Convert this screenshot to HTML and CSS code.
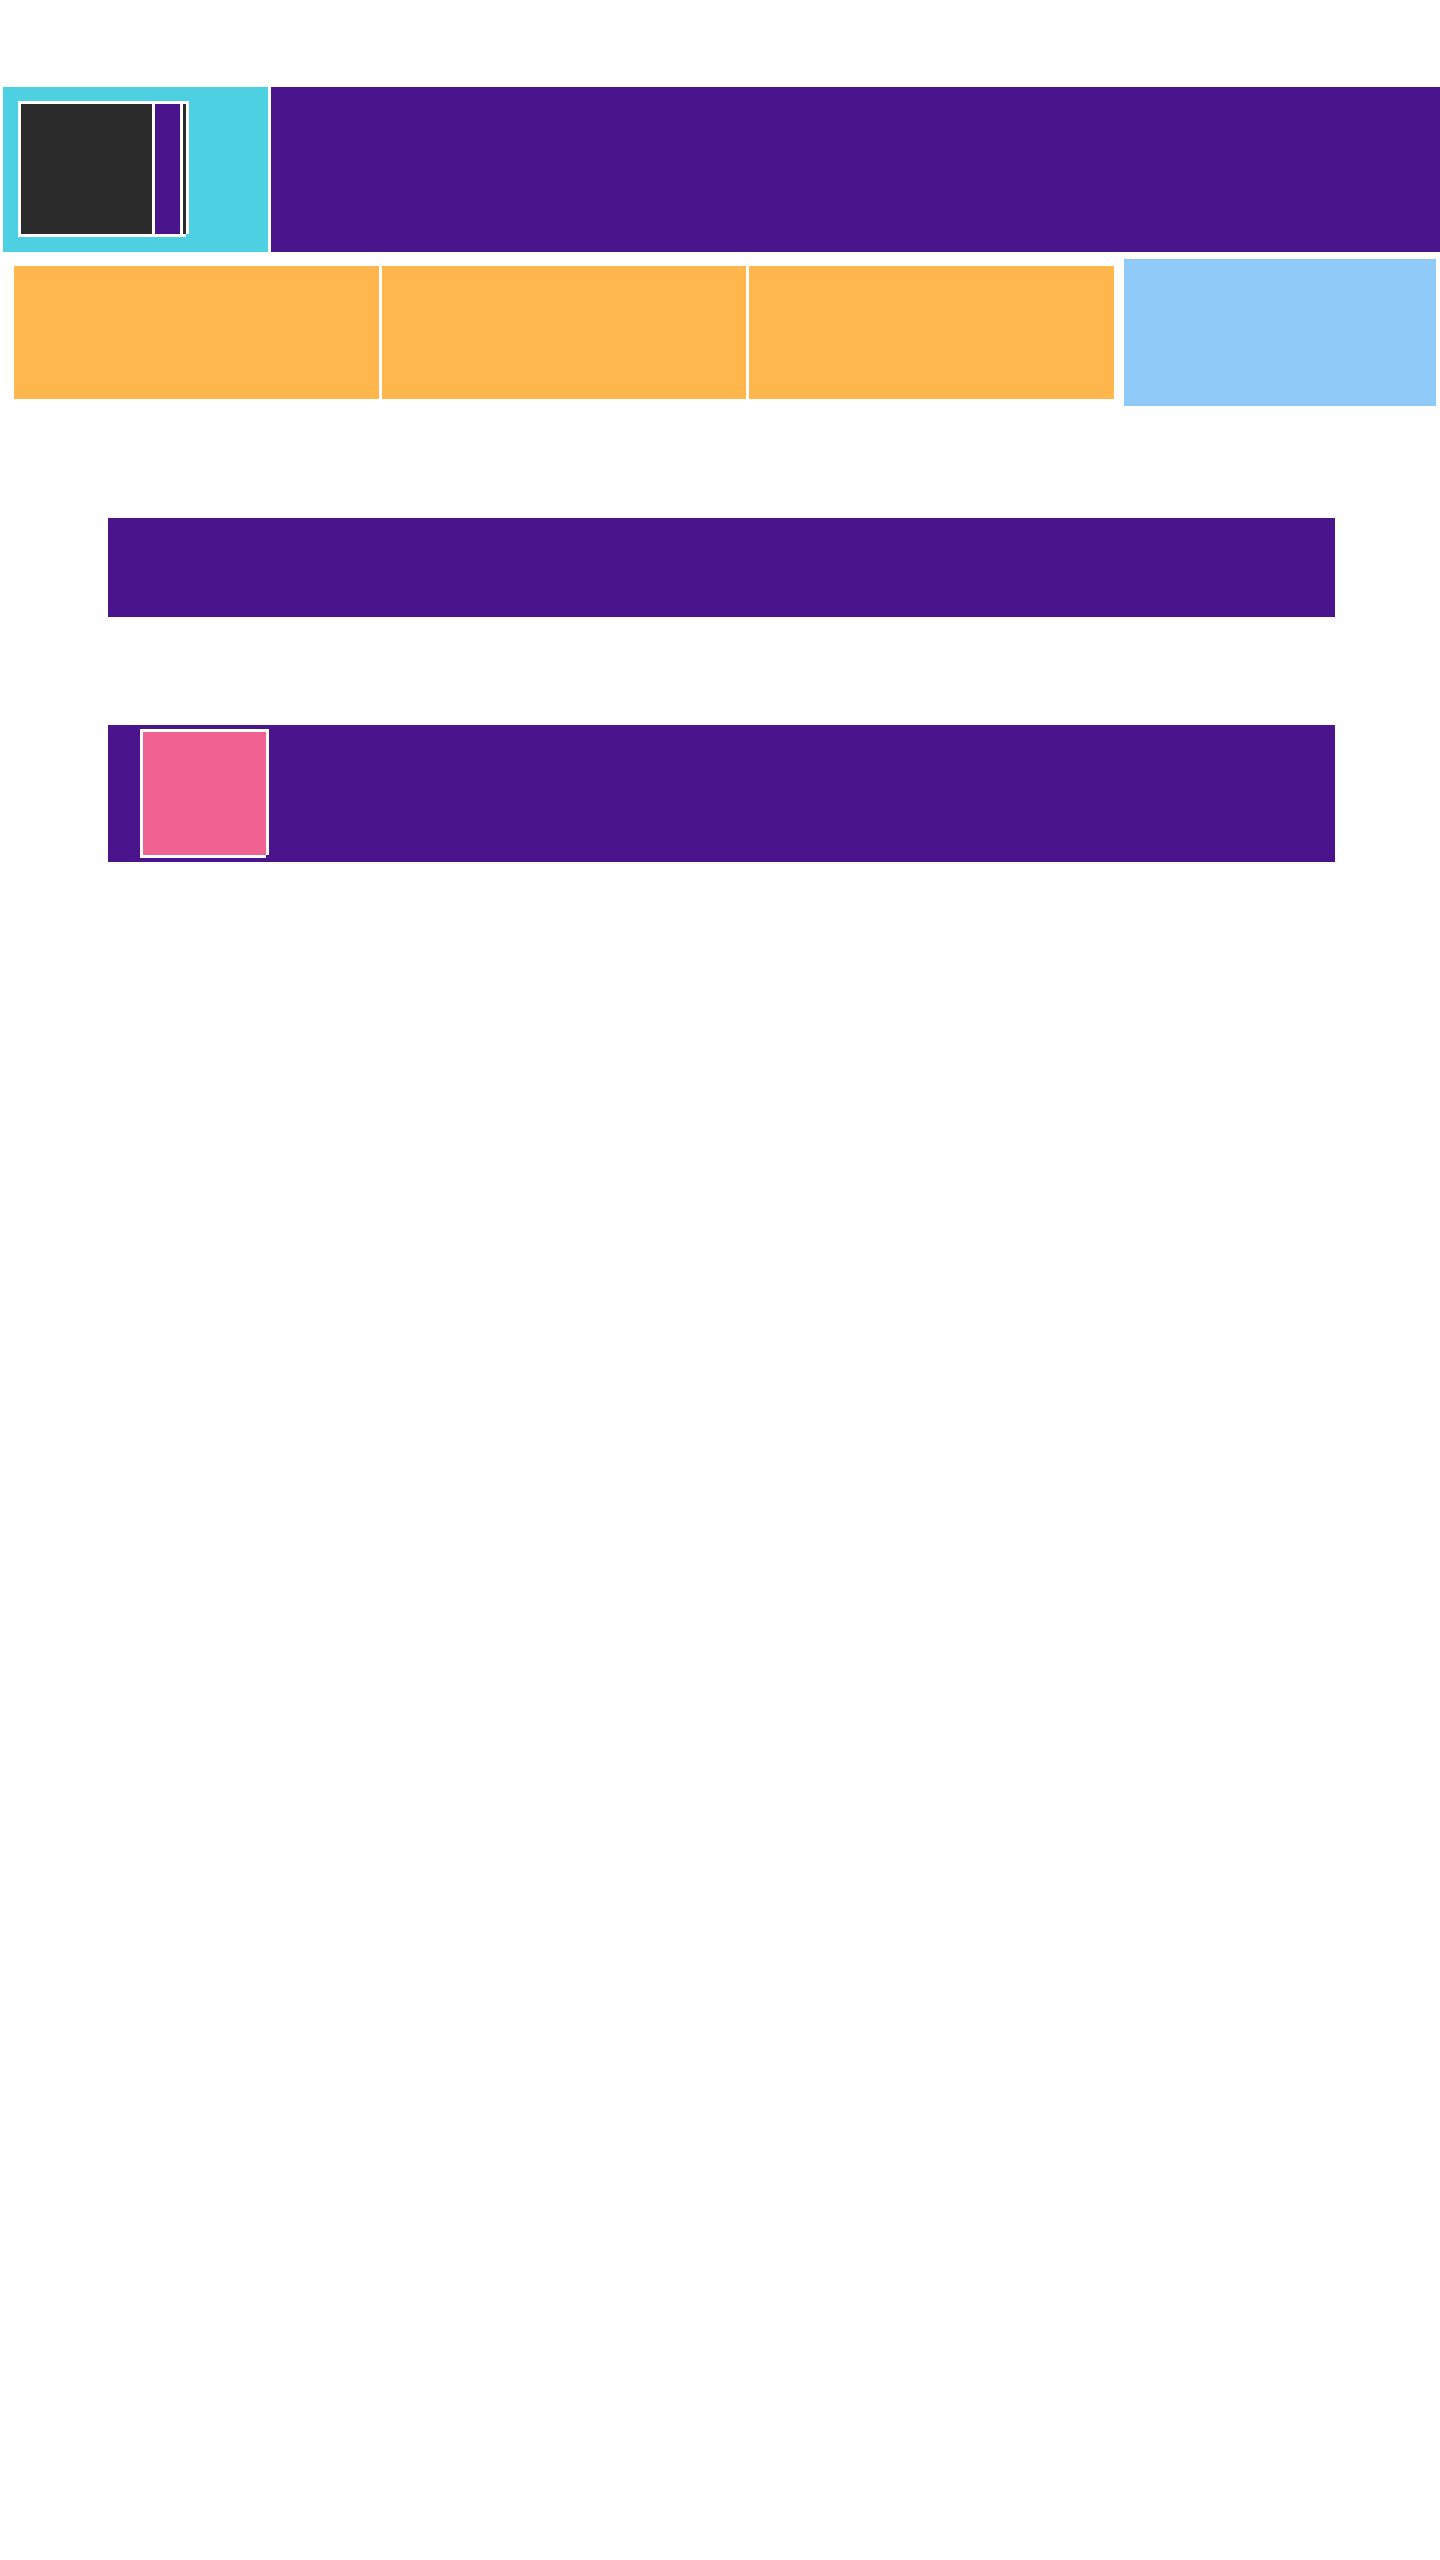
FILE: index.html
```html
<!DOCTYPE html>
<html lang="en">
<head>
    <meta charset="UTF-8">
    <meta name="viewport" content="width=device-width, initial-scale=1.0">
    <title>Layout</title>
    <link rel="stylesheet" href="styles.css">
</head>
<body>
    <div class="top">
        <header class="header">
            <div class="brand">
                <div class="frame frame-brand">
                    <div class="block-dark block-main"></div>
                    <div class="block-purple block-side"></div>
                    <div class="block-dark block-thin"></div>
                </div>
            </div>
            <div class="header-bar"></div>
        </header>

        <div class="tiles-row">
            <div class="tiles">
                <div class="tile"></div>
                <div class="tile"></div>
                <div class="tile"></div>
            </div>
            <div class="aside"></div>
        </div>
    </div>

    <main class="content">
        <div class="bar"></div>
        <div class="bar bar-media">
            <div class="frame frame-media">
                <div class="block-pink"></div>
            </div>
        </div>
    </main>
</body>
</html>
```

FILE: styles.css
```css
body {
    margin: 0;
    background-color: #fefefe;
    font-family: "Liberation Sans", Arial, sans-serif;
}
.top {
    background-color: #fff;
    padding: 87px 0 0 3px;
}
.header {
    display: flex;
    gap: 3px;
    height: 165px;
}
.brand {
    width: 265px;
    background-color: #4dd0e1;
    padding: 14px 15px;
    box-sizing: border-box;
}
.header-bar {
    flex: 1;
    background-color: #4a148c;
}

/* white frame: padded on three sides, a strip spills out to the right */
.frame {
    display: flex;
    background-color: #fff;
    padding: 3px 0 3px 3px;
    box-sizing: border-box;
}
.frame > div {
    flex-shrink: 0;
}
.frame::after {
    content: "";
    flex-shrink: 0;
    width: 3px;
    margin-top: -3px;
    background-color: #fff;
}
.frame-brand {
    width: 168px;
    height: 136px;
    gap: 3px;
}
.frame-brand::after {
    margin-left: -3px;
}
.block-dark {
    background-color: #2b2b2b;
}
.block-purple {
    background-color: #4a148c;
}
.block-main {
    width: 131px;
}
.block-side {
    width: 25px;
}
.block-thin {
    width: 3px;
}

.tiles-row {
    display: flex;
    align-items: center;
    gap: 10px;
    margin-top: 7px;
    padding: 0 4px 0 11px;
}
.tiles {
    display: flex;
    gap: 3px;
    width: 1100px;
}
.tile {
    flex: 1;
    height: 133px;
    background-color: #ffb74d;
}
.aside {
    flex: 1;
    height: 147px;
    background-color: #90caf9;
}

.content {
    width: 1227px;
    margin: 112px 0 0 108px;
    display: flex;
    flex-direction: column;
    gap: 108px;
}
.bar {
    height: 99px;
    background-color: #4a148c;
}
.bar-media {
    height: auto;
    padding: 4px 32px;
}
.frame-media {
    width: 126px;
    height: 129px;
}
.block-pink {
    width: 123px;
    height: 123px;
    background-color: #f06292;
}
```
